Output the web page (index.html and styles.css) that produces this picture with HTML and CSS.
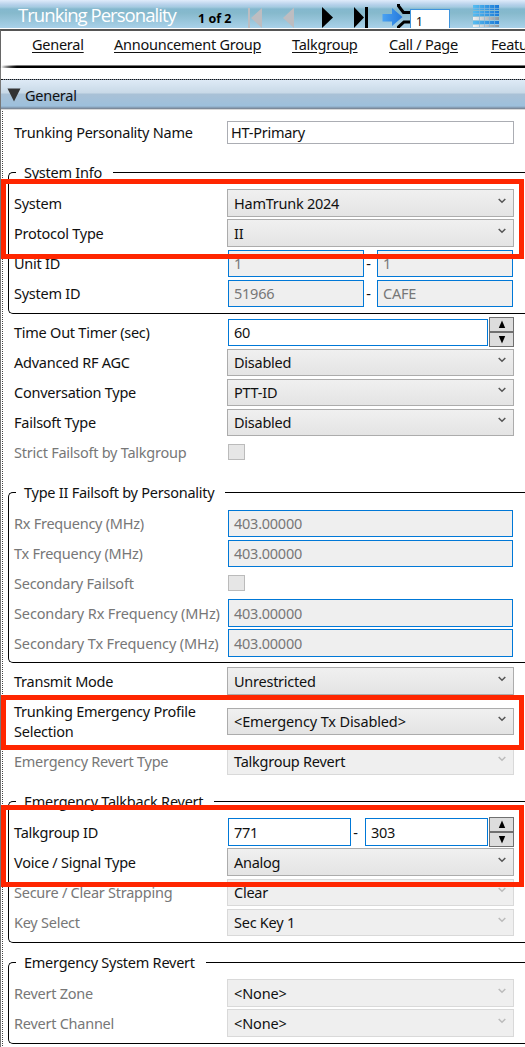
FILE: index.html
```html
<!DOCTYPE html>
<html lang="en">
<head>
<meta charset="utf-8">
<title>Trunking Personality</title>
<link rel="stylesheet" href="styles.css">
</head>
<body>
<svg width="0" height="0" class="defs">
  <symbol id="chev" viewBox="0 0 8 6"><path d="M.7 1 L4 4.3 L7.3 1" fill="none" stroke="currentColor" stroke-width="1.5"/></symbol>
  <symbol id="up" viewBox="0 0 8 9"><path d="M4 .5 L7.2 8 H.8Z" fill="#000"/></symbol>
  <symbol id="down" viewBox="0 0 8 9"><path d="M4 8.5 L.8 1 H7.2Z" fill="#000"/></symbol>
</svg>
<div class="app">
  <header class="titlebar">
    <h1>Trunking Personality</h1>
    <span class="count">1 of 2</span>
    <svg class="tools" width="277" height="28" viewBox="0 0 277 28">
      <defs>
        <linearGradient id="arrow" x1="0" x2="1"><stop offset="0" stop-color="#4aa2f2"/><stop offset="1" stop-color="#2478dc"/></linearGradient>
        <linearGradient id="blue" x1="0" x2="1"><stop offset="0" stop-color="#58bdf0"/><stop offset="1" stop-color="#1979d8"/></linearGradient>
        <linearGradient id="silver" x1="0" x2="1"><stop offset="0" stop-color="#f0f1f2"/><stop offset="1" stop-color="#8c969e"/></linearGradient>
      </defs>
      <path d="M0 8H2V28H0ZM14 8V28L3 18Z" fill="#bdbdc1"/>
      <path d="M46 7.500V28L35 18Z" fill="#bdbdc1"/>
      <path d="M74 7L85 17.500L74 28Z" fill="#000"/>
      <path d="M106 7L116 17.500L106 28ZM117 7H120V28H117Z" fill="#000"/>
      <path d="M134.500 14H144V8L154.500 17L144 26V21.500H134.500Z" fill="url(#arrow)"/>
      <path d="M150.500 4V6L155.500 12.500H163M150.500 28V27L156 22H163" fill="none" stroke="#000" stroke-width="3"/>
      <path d="M225 5H251V10H225ZM225 11H251V16H225ZM225 21H251V24H225Z" fill="url(#blue)"/>
      <path d="M225 17H251V20H225ZM225 25H251V27H225Z" fill="url(#silver)"/>
      <path d="M225 8.500H251M225 13.500H251M231.500 5V27M236.500 5V27M241.500 5V27M246.500 5V27" stroke="#86b7da" stroke-width=".7"/>
    </svg>
    <span class="page-no">1</span>
  </header>
  <nav class="tabs"><a class="t1">General</a><a class="t2">Announcement Group</a><a class="t3">Talkgroup</a><a class="t4">Call / Page</a><a class="t5">Featu</a></nav>
  <main>
    <h2><svg width="14" height="14" viewBox="0 0 14 14"><path d="M.5.500H13.500L7 13.500Z" fill="#333"/></svg><span>General</span></h2>

    <div class="row name"><label>Trunking Personality Name</label><span class="input plain">HT-Primary</span></div>

    <section class="group info">
      <h3>System Info</h3>
      <div class="row"><label>System</label><span class="select tall">HamTrunk 2024<svg><use href="#chev"/></svg></span></div>
      <div class="row"><label>Protocol Type</label><span class="select tall">II<svg><use href="#chev"/></svg></span></div>
      <div class="row"><label>Unit ID</label><span class="pair"><span class="input off">1</span><i>-</i><span class="input off">1</span></span></div>
      <div class="row"><label>System ID</label><span class="pair"><span class="input off">51966</span><i>-</i><span class="input off">CAFE</span></span></div>
    </section>

    <div class="rows timer">
      <div class="row"><label>Time Out Timer (sec)</label><span class="spin"><span class="input">60</span><span class="steps"><b><svg><use href="#up"/></svg></b><b><svg><use href="#down"/></svg></b></span></span></div>
      <div class="row"><label>Advanced RF AGC</label><span class="select">Disabled<svg><use href="#chev"/></svg></span></div>
      <div class="row"><label>Conversation Type</label><span class="select">PTT-ID<svg><use href="#chev"/></svg></span></div>
      <div class="row"><label>Failsoft Type</label><span class="select">Disabled<svg><use href="#chev"/></svg></span></div>
      <div class="row"><label class="dim">Strict Failsoft by Talkgroup</label><span class="check"></span></div>
    </div>

    <section class="group failsoft">
      <h3>Type II Failsoft by Personality</h3>
      <div class="row"><label class="dim">Rx Frequency (MHz)</label><span class="input off">403.00000</span></div>
      <div class="row"><label class="dim">Tx Frequency (MHz)</label><span class="input off">403.00000</span></div>
      <div class="row"><label class="dim">Secondary Failsoft</label><span class="check"></span></div>
      <div class="row"><label class="dim wide">Secondary Rx Frequency (MHz)</label><span class="input off tall">403.00000</span></div>
      <div class="row"><label class="dim wide">Secondary Tx Frequency (MHz)</label><span class="input off tall">403.00000</span></div>
    </section>

    <div class="rows mode">
      <div class="row"><label>Transmit Mode</label><span class="select tall">Unrestricted<svg><use href="#chev"/></svg></span></div>
      <div class="row double"><label>Trunking Emergency Profile<br>Selection</label><span class="select wide">&lt;Emergency Tx Disabled&gt;<svg><use href="#chev"/></svg></span></div>
      <div class="row"><label class="dim">Emergency Revert Type</label><span class="select off">Talkgroup Revert<svg><use href="#chev"/></svg></span></div>
    </div>

    <section class="group talkback">
      <h3>Emergency Talkback Revert</h3>
      <div class="row"><label>Talkgroup ID</label><span class="spin"><span class="input tall first">771</span><i>-</i><span class="input tall">303</span><span class="steps"><b><svg><use href="#up"/></svg></b><b><svg><use href="#down"/></svg></b></span></span></div>
      <div class="row"><label>Voice / Signal Type</label><span class="select tall">Analog<svg><use href="#chev"/></svg></span></div>
      <div class="row"><label class="dim">Secure / Clear Strapping</label><span class="select off">Clear<svg><use href="#chev"/></svg></span></div>
      <div class="row"><label class="dim">Key Select</label><span class="select off">Sec Key 1<svg><use href="#chev"/></svg></span></div>
    </section>

    <section class="group system">
      <h3>Emergency System Revert</h3>
      <div class="row"><label class="dim">Revert Zone</label><span class="select off tall wide">&lt;None&gt;<svg><use href="#chev"/></svg></span></div>
      <div class="row"><label class="dim">Revert Channel</label><span class="select off tall wide">&lt;None&gt;<svg><use href="#chev"/></svg></span></div>
    </section>
  </main>
  <div class="mark m1"></div>
  <div class="mark m2"></div>
  <div class="mark m3"></div>
</div>
</body>
</html>
```
FILE: styles.css
```css
* { box-sizing: border-box; }
body { margin: 0; background: #fff; color: #111; font: 14.5px/20px "Noto Sans", "Open Sans", sans-serif; letter-spacing: -.25px; }
.defs { display: block; }
.app { position: relative; width: 525px; height: 1047px; overflow: hidden; }
h1, h2, h3 { margin: 0; font-weight: 400; }

.titlebar { display: flex; height: 28px; background: linear-gradient(#dfebfa 0, #b3cfe9 5px, #a5cbe0 7px, #84b8ce 9px, #86b9cc 13px, #a9d1e9 100%); }
h1 { width: 180px; padding-left: 18px; color: #fff; font: 400 18.5px/29px "Open Sans", "Noto Sans", sans-serif; white-space: nowrap; letter-spacing: -.95px; }
.count { width: 68px; padding-left: 18px; font-weight: 700; font-size: 12.5px; line-height: 38px; letter-spacing: 0; color: #000; white-space: nowrap; }
.tools { flex: none; }
.page-no { position: absolute; left: 410px; top: 9px; width: 40px; height: 19px; padding-left: 5px; border: 1px solid #3f94dc; border-bottom: 0; background: #fff; font-size: 12px; line-height: 24px; }

.tabs { display: flex; height: 39px; margin-top: 1px; padding-left: 31px; border-top: 2px solid #555; border-left: 1px solid #666; background: linear-gradient(90deg, transparent, #555 20px) 0 100% / 100% 3px no-repeat, linear-gradient(90deg, transparent, #000 16px) 0 100% / 100% 2px no-repeat; background: linear-gradient(90deg, transparent, #000 16px) 0 100% / 100% 2px no-repeat, linear-gradient(90deg, transparent, #777 16px) 0 100% / 100% 3px no-repeat; line-height: 27px; }
.tabs a { flex: none; text-decoration: underline; text-underline-offset: 2px; white-space: nowrap; }
.t1 { width: 82px; } .t2 { width: 178px; } .t3 { width: 97px; } .t4 { width: 102px; }

main { height: 979px; padding-top: 11px; border-left: 1px solid #777; background: repeating-linear-gradient(#444 0 1px, transparent 1px 2px) 1px 11px / 1px 100% no-repeat; }
h2 { display: flex; height: 31px; padding: 0 0 0 6px; gap: 4px; align-items: center; border-top: 1px dotted #111; border-bottom: 1px solid #d8d8d8; background: linear-gradient(#deeaf6, #c8d9e7 13px, #a9c1d6 14px, #9dc0dc 26px, #8094a9 28px, #777f8b 29px); font-size: inherit; }

.row { display: grid; grid-template-columns: 213px 287px; height: 30px; align-items: center; white-space: nowrap; }
.rows, .name { padding-left: 13px; }
.name { height: 24px; margin-top: 10px; }
.dim { color: #777; }
.wide { letter-spacing: -.13px; }
.group { margin-left: 7px; padding-left: 5px; border: 1px solid #000; border-right: 0; border-radius: 5px 0 0 5px; }
h3 { width: fit-content; height: 20px; margin: -11px 0 6px 2px; padding: 0 11px 0 8px; background: #fff; font-size: inherit; }
.info { height: 142px; margin-top: 28px; }
.timer { margin-top: 3px; }
.failsoft { height: 171px; margin-top: 25px; }
.mode { margin-top: 3px; }
.talkback { height: 142px; margin-top: 25px; }
.system { height: 82px; margin-top: 19px; }
.row.double { height: 50px; }

.select, .input { display: flex; align-items: center; height: 27px; border: 1px solid #acacac; color: #111; line-height: 19px; }
.select { justify-content: space-between; padding: 0 7px 0 6px; background: linear-gradient(#f0f0f0, #e4e4e4); }
.input.tall, .select.tall { height: 28px; }
.select svg { width: 8px; height: 6px; margin-top: -4px; color: #555; }
.select.off { border-color: #d9d9d9; background: #efefef; }
.select.off svg { color: #bbb; }
.input { margin: 0 1px; padding-left: 5px; border-color: #0078d7; background: #fff; }
.input.off { background: #efefef; color: #777; }
.input.plain { height: 23px; margin: 0; padding-left: 3px; border-color: #abadb3; }
.check { width: 17px; height: 16px; margin-left: 1px; border: 1px solid #bbb; background: #e6e6e6; }
i { font-style: normal; text-align: center; }
.pair { display: grid; grid-template-columns: 138px 11px 138px; align-items: center; }
.pair i { margin-left: -4px; }
.spin { display: flex; align-items: center; }
.spin .input { flex: 1; }
.spin .first { flex: none; width: 123px; }
.spin i { width: 12px; padding-right: 5px; }
.steps { display: grid; grid-template-rows: 15px 15px; width: 25px; }
.steps b { display: flex; align-items: center; justify-content: center; border: 1px solid #707070; background: #ddd; }
.steps svg { width: 8px; height: 9px; }

.mark { position: absolute; left: 1px; width: 523px; border: 5px solid #ff2600; }
.m1 { top: 179px; height: 80px; }
.m2 { top: 695px; height: 55px; }
.m3 { top: 805px; height: 82px; }
```
